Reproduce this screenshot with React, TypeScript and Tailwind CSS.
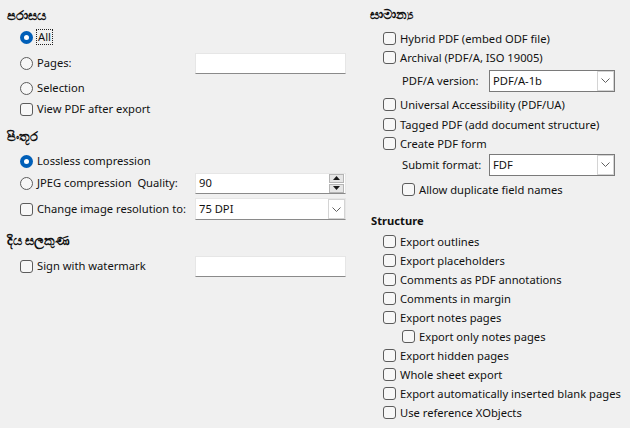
import type { ReactNode } from 'react'

const FONT = { fontFamily: '"Noto Sans", "Segoe UI", "Liberation Sans", sans-serif' }

function Box() {
  return <span className="h-[13px] w-[13px] shrink-0 rounded-[3px] border border-[#5c5c5c] bg-[#f7f7f7]" />
}

function Radio({ on = false }: { on?: boolean }) {
  if (on)
    return (
      <span className="flex h-[13px] w-[13px] shrink-0 items-center justify-center rounded-full bg-[#005fb8]">
        <span className="h-[5px] w-[5px] rounded-full bg-white" />
      </span>
    )
  return <span className="h-[13px] w-[13px] shrink-0 rounded-full border border-[#5c5c5c] bg-[#f7f7f7]" />
}

function Chevron() {
  return (
    <svg width="9" height="5" viewBox="0 0 9 5" className="text-[#606060]">
      <path d="M0.5 0.5 L4.5 4.5 L8.5 0.5" fill="none" stroke="currentColor" strokeWidth="1" />
    </svg>
  )
}

function TextField({ value = '', w = 'w-[151px]', spin = false }: { value?: string; w?: string; spin?: boolean }) {
  return (
    <div className={`flex h-[21px] ${w} shrink-0 items-center border border-[#e6e6e6] border-b-[#8a8a8a] bg-white pl-[3px]`}>
      <span className="flex-1">{value}</span>
      {spin && (
        <div className="mr-[1px] flex flex-col gap-[1px]">
          <span className="flex h-[9px] w-[15px] items-center justify-center border border-[#b5b5b5] bg-[#e6e6e6]">
            <svg width="7" height="4" viewBox="0 0 7 4"><path d="M0 4 L3.5 0 L7 4Z" fill="#1a1a1a" /></svg>
          </span>
          <span className="flex h-[9px] w-[15px] items-center justify-center border border-[#b5b5b5] bg-[#e6e6e6]">
            <svg width="7" height="4" viewBox="0 0 7 4"><path d="M0 0 L3.5 4 L7 0Z" fill="#1a1a1a" /></svg>
          </span>
        </div>
      )}
    </div>
  )
}

function Combo({ value, framed = false, w }: { value: string; framed?: boolean; w: string }) {
  return (
    <div
      className={`flex h-[22px] ${w} shrink-0 items-stretch bg-white ${
        framed ? 'border border-[#7a7a7a]' : 'border border-[#e6e6e6] border-b-[#8a8a8a]'
      }`}
    >
      <span className="flex flex-1 items-center pl-[3px]">{value}</span>
      <span className="flex w-[17px] items-center justify-center border border-[#d4d4d4] bg-white">
        <Chevron />
      </span>
    </div>
  )
}

function Row({ mt = '', pl = '', h = 'h-[20px]', children }: { mt?: string; pl?: string; h?: string; children: ReactNode }) {
  return <div className={`flex ${h} items-center ${mt} ${pl}`}>{children}</div>
}

function Check({ label, mt, pl = 'pl-[23px]' }: { label: string; mt?: string; pl?: string }) {
  return (
    <Row h="h-[19px]" mt={mt} pl={pl}>
      <Box />
      <span className="ml-[4px] whitespace-nowrap">{label}</span>
    </Row>
  )
}

export default function App() {
  return (
    <div className="flex h-[428px] w-[630px] bg-[#f0f0f0] text-[11.2px] leading-none text-[#111]" style={FONT}>
      {/* left column */}
      <div className="flex w-[360px] shrink-0 flex-col pt-[6px]">
        <Row pl="pl-[7px]">
          <span className="text-[12.5px] font-semibold">පරාසය</span>
        </Row>
        <Row mt="mt-[1px]" pl="pl-[20px]">
          <Radio on />
          <span className="ml-[3px] border border-dotted border-[#222] px-[1px] py-[1px]">All</span>
        </Row>
        <Row mt="mt-[6px]" pl="pl-[20px]">
          <Radio />
          <span className="ml-[4px] w-[158px]">Pages:</span>
          <TextField />
        </Row>
        <Row mt="mt-[5px]" pl="pl-[20px]">
          <Radio />
          <span className="ml-[4px]">Selection</span>
        </Row>
        <Row mt="mt-[1px]" pl="pl-[20px]">
          <Box />
          <span className="ml-[4px]">View PDF after export</span>
        </Row>

        <Row mt="mt-[8px]" pl="pl-[7px]">
          <span className="text-[12.5px] font-semibold">පිංතූර</span>
        </Row>
        <Row mt="mt-[4px]" pl="pl-[20px]">
          <Radio on />
          <span className="ml-[4px]">Lossless compression</span>
        </Row>
        <Row mt="mt-[2px]" pl="pl-[20px]">
          <Radio />
          <span className="ml-[4px] w-[158px] whitespace-nowrap">JPEG compression&nbsp; Quality:</span>
          <TextField value="90" spin />
        </Row>
        <Row mt="mt-[6px]" pl="pl-[20px]">
          <Box />
          <span className="ml-[4px] w-[158px] whitespace-nowrap">Change image resolution to:</span>
          <Combo value="75 DPI" w="w-[151px]" />
        </Row>

        <Row mt="mt-[12px]" pl="pl-[7px]">
          <span className="text-[12.5px] font-semibold">දිය සලකුණ</span>
        </Row>
        <Row mt="mt-[5px]" pl="pl-[20px]">
          <Box />
          <span className="ml-[4px] w-[158px]">Sign with watermark</span>
          <TextField />
        </Row>
      </div>

      {/* right column */}
      <div className="flex min-w-0 flex-1 flex-col pt-[6px]">
        <Row h="h-[19px]" pl="pl-[10px]">
          <span className="text-[12.5px] font-semibold">සාමාන්‍ය</span>
        </Row>
        <Check label="Hybrid PDF (embed ODF file)" mt="mt-[4px]" />
        <Check label="Archival (PDF/A, ISO 19005)" />
        <Row h="h-[19px]" mt="mt-[4px]" pl="pl-[42px]">
          <span className="w-[87px]">PDF/A version:</span>
          <Combo value="PDF/A-1b" framed w="w-[126px]" />
        </Row>
        <Check label="Universal Accessibility (PDF/UA)" mt="mt-[5px]" />
        <Check label="Tagged PDF (add document structure)" mt="mt-[1px]" />
        <Check label="Create PDF form" />
        <Row h="h-[19px]" mt="mt-[2px]" pl="pl-[42px]">
          <span className="w-[87px]">Submit format:</span>
          <Combo value="FDF" framed w="w-[126px]" />
        </Row>
        <Check label="Allow duplicate field names" mt="mt-[6px]" pl="pl-[42px]" />

        <Row h="h-[19px]" mt="mt-[12px]" pl="pl-[11px]">
          <span className="font-bold">Structure</span>
        </Row>
        <Check label="Export outlines" mt="mt-[2px]" />
        <Check label="Export placeholders" />
        <Check label="Comments as PDF annotations" />
        <Check label="Comments in margin" />
        <Check label="Export notes pages" />
        <Check label="Export only notes pages" pl="pl-[42px]" />
        <Check label="Export hidden pages" />
        <Check label="Whole sheet export" />
        <Check label="Export automatically inserted blank pages" />
        <Check label="Use reference XObjects" />
      </div>
    </div>
  )
}
